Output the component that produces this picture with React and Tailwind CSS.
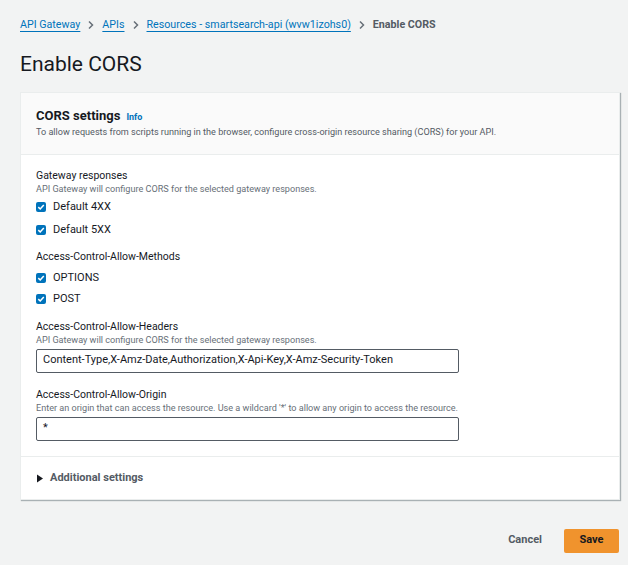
import React from 'react';

const Check = ({ label }) => (
  <label className="flex items-center gap-[7px] h-[21px]">
    <span className="w-[10px] h-[10px] rounded-[2px] bg-[#0073bb] flex items-center justify-center">
      <svg width="8" height="8" viewBox="0 0 8 8">
        <path d="M1.3 4.1 L3.2 6 L6.8 1.9" fill="none" stroke="white" strokeWidth="1.5" />
      </svg>
    </span>
    <span className="text-[11px] text-[#16191f]">{label}</span>
  </label>
);

const Crumb = ({ children }) => (
  <a className="text-[#0073bb] underline underline-offset-[3px] decoration-1">{children}</a>
);

const Sep = () => (
  <svg width="10" height="10" viewBox="0 0 10 10" className="mx-[6px]">
    <path d="M3 1.5 L6.5 5 L3 8.5" fill="none" stroke="#687078" strokeWidth="1.5" />
  </svg>
);

export default function App() {
  return (
    <div
      className="min-h-[565px] bg-[#f2f3f3] text-[#16191f] pl-[20px] pr-[8px] pt-[17px]"
      style={{ fontFamily: 'Roboto, "Liberation Sans", sans-serif' }}
    >
      {/* Breadcrumbs */}
      <div className="flex items-center text-[10.7px] h-[16px]">
        <Crumb>API Gateway</Crumb>
        <Sep />
        <Crumb>APIs</Crumb>
        <Sep />
        <Crumb>Resources - smartsearch-api (wvw1izohs0)</Crumb>
        <Sep />
        <span className="font-bold text-[#545b64]">Enable CORS</span>
      </div>

      <h1 className="text-[21px] leading-[28px] mt-[17px] mb-[14px]">Enable CORS</h1>

      {/* Card */}
      <div className="bg-white border border-[#eaeded] shadow-[1px_1px_1px_0_rgba(0,28,36,0.3)]">
        <div className="bg-[#fafafa] border-b border-[#eaeded] px-[15px] pt-[13px] pb-[14px]">
          <div className="flex items-baseline gap-[6px]">
            <h2 className="text-[13px] font-bold leading-[20px]">CORS settings</h2>
            <span className="text-[9px] font-bold text-[#0073bb]">Info</span>
          </div>
          <p className="text-[9.1px] text-[#545b64]">
            To allow requests from scripts running in the browser, configure cross-origin resource sharing (CORS) for your API.
          </p>
        </div>

        <div className="px-[15px] pt-[13px] pb-[15px] border-b border-[#eaeded]">
          <div className="text-[10.5px] leading-[15px]">Gateway responses</div>
          <div className="text-[9.1px] text-[#687078] leading-[13px]">
            API Gateway will configure CORS for the selected gateway responses.
          </div>
          <div className="mt-[1px]">
            <Check label="Default 4XX" />
            <div className="h-[2px]" />
            <Check label="Default 5XX" />
          </div>

          <div className="text-[10.5px] leading-[15px] mt-[8px]">Access-Control-Allow-Methods</div>
          <div className="mt-[4px]">
            <Check label="OPTIONS" />
            <Check label="POST" />
          </div>

          <div className="text-[10.5px] leading-[15px] mt-[9px]">Access-Control-Allow-Headers</div>
          <div className="text-[9.1px] text-[#687078] leading-[13px]">
            API Gateway will configure CORS for the selected gateway responses.
          </div>
          <div className="mt-[2px] w-[423px] h-[24px] border border-[#545b64] rounded-[2px] flex items-center px-[6px] text-[11px]">
            Content-Type,X-Amz-Date,Authorization,X-Api-Key,X-Amz-Security-Token
          </div>

          <div className="text-[10.5px] leading-[15px] mt-[14px]">Access-Control-Allow-Origin</div>
          <div className="text-[9.1px] text-[#687078] leading-[13px]">
            Enter an origin that can access the resource. Use a wildcard '*' to allow any origin to access the resource.
          </div>
          <div className="mt-[2px] w-[423px] h-[24px] border border-[#545b64] rounded-[2px] flex items-center px-[6px] text-[11px]">
            *
          </div>
        </div>

        <div className="px-[15px] h-[42px] pt-[2px] flex items-center gap-[6px]">
          <svg width="8" height="9" viewBox="0 0 8 9">
            <path d="M1 0.5 L7 4.5 L1 8.5 Z" fill="#16191f" />
          </svg>
          <span className="text-[11px] font-bold text-[#545b64]">Additional settings</span>
        </div>
      </div>

      {/* Footer buttons */}
      <div className="flex justify-end items-center mt-[29px] pr-[1px]">
        <button className="text-[11px] font-bold text-[#545b64] px-[14px] h-[24px] mr-[8px]">Cancel</button>
        <button className="text-[11px] font-bold text-[#16191f] bg-[#f0932d] w-[55px] h-[24px] rounded-[2px]">Save</button>
      </div>
    </div>
  );
}
